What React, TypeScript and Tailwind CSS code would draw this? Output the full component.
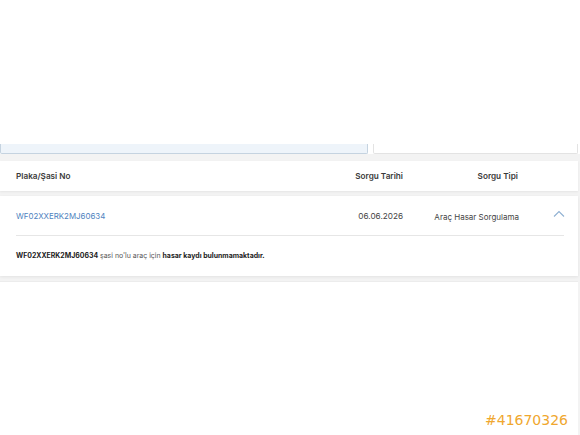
import React from 'react';

const rows = [
    {
        plate: 'WF02XXERK2MJ60634',
        date: '06.06.2026',
        type: 'Araç Hasar Sorgulama',
    },
];

const App: React.FC = () => {
    return (
        <div className="w-[580px] h-[435px] flex flex-col bg-white overflow-hidden font-['Inter','Noto_Sans',sans-serif] text-[8.2px]">
            {/* Search inputs (scrolled, only the bottom edge shows) */}
            <div className="flex gap-[5px] pr-[2px] mt-[144px]">
                <div className="w-[368px] h-[10px] bg-[#eef4fa] border border-t-0 border-[#c5d3e0] rounded-b-[2px]" />
                <div className="flex-1 h-[10px] bg-white border border-t-0 border-[#e3e3e3] rounded-b-[2px]" />
            </div>

            <div className="flex-1 flex flex-col gap-[5px] bg-[#f3f3f3] pt-[7px] pr-[2px]">
                {/* Table header */}
                <div className="h-[30px] flex items-center bg-white pl-4 pr-[14px] font-semibold text-[#3a3a3a] shadow-[0_1px_2px_rgba(0,0,0,0.06)]">
                    <div className="flex-1">Plaka/Şasi No</div>
                    <div className="w-[100px] text-right">Sorgu Tarihi</div>
                    <div className="w-[116px] text-right pr-[1px]">Sorgu Tipi</div>
                    <div className="w-[45px]" />
                </div>

                {rows.map((row) => (
                    <div key={row.plate} className="h-[80px] bg-white pl-4 pr-[14px] shadow-[0_1px_3px_rgba(0,0,0,0.07)]">
                        <div className="h-[40px] flex items-center border-b border-[#e6e6e6] pt-[2px]">
                            <div className="flex-1 text-[#4f83c0] text-[7.9px]">{row.plate}</div>
                            <div className="w-[100px] text-right text-[#444]">{row.date}</div>
                            <div className="w-[116px] text-right text-[#444] text-[8px]">{row.type}</div>
                            <div className="w-[45px] flex justify-end">
                                <svg width="12" height="8" viewBox="0 0 12 8" fill="none" className="mr-[-1px] mb-[5px]">
                                    <path d="M1 6.5L6 1.5L11 6.5" stroke="#8fb0d2" strokeWidth="1.1" />
                                </svg>
                            </div>
                        </div>
                        <div className="h-[39px] flex items-center pt-[2px] text-[#555] text-[6.95px]">
                            <p>
                                <span className="font-bold text-[#222]">{row.plate}</span> şasi no'lu araç için{' '}
                                <span className="font-bold text-[#222]">hasar kaydı bulunmamaktadır.</span>
                            </p>
                        </div>
                    </div>
                ))}

                <div className="flex-1 flex items-end justify-end bg-white border-t border-[#ececec] pr-[10px] pb-[8px]">
                    <span className="font-['DejaVu_Sans',sans-serif] text-[14px] leading-none text-[#f0a72e]">#41670326</span>
                </div>
            </div>
        </div>
    );
};

export default App;
